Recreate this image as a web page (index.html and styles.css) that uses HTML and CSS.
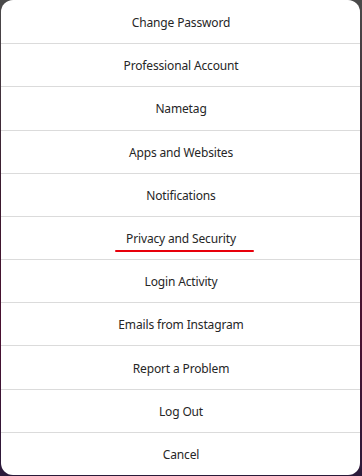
FILE: index.html
```html
<!DOCTYPE html>
<html lang="en">
<head>
<meta charset="utf-8">
<title>Settings</title>
<link rel="stylesheet" href="styles.css">
</head>
<body>
<div class="backdrop">
  <div class="dialog">
    <button class="item">Change Password</button>
    <button class="item">Professional Account</button>
    <button class="item">Nametag</button>
    <button class="item">Apps and Websites</button>
    <button class="item">Notifications</button>
    <button class="item"><span class="marked">Privacy and Security</span></button>
    <button class="item">Login Activity</button>
    <button class="item">Emails from Instagram</button>
    <button class="item">Report a Problem</button>
    <button class="item">Log Out</button>
    <button class="item">Cancel</button>
  </div>
</div>
</body>
</html>
```
FILE: styles.css
```css
* { box-sizing: border-box; }
html, body {
  margin: 0;
  padding: 0;
  width: 362px;
  height: 476px;
  overflow: hidden;
}
body {
  background: linear-gradient(180deg, #4a4a4a 0%, #3a1a2e 40%, #4a1030 70%, #2a1a3a 100%);
  font-family: "Noto Sans", "Open Sans", sans-serif;
}
.backdrop {
  height: 476px;
  padding: 0 2px 1px 1px;
}
.dialog {
  height: 100%;
  background: #fff;
  border-radius: 12px;
  display: grid;
  grid-template-rows: repeat(11, 1fr);
  overflow: hidden;
}
.item {
  border: 0;
  border-top: 1px solid #dbdbdb;
  background: transparent;
  font-family: inherit;
  font-size: 12px;
  letter-spacing: -0.15px;
  color: #262626;
  display: flex;
  align-items: center;
  justify-content: center;
  padding: 2px 0 0 1px;
  margin: 0;
  line-height: 16px;
}
.item:first-child { border-top: 0; }
.marked { position: relative; }
.marked::after {
  content: "";
  position: absolute;
  left: -11px;
  right: -18px;
  top: 100%;
  margin-top: 3px;
  height: 2.5px;
  border-radius: 1.5px;
  background: #e8000b;
}
```
